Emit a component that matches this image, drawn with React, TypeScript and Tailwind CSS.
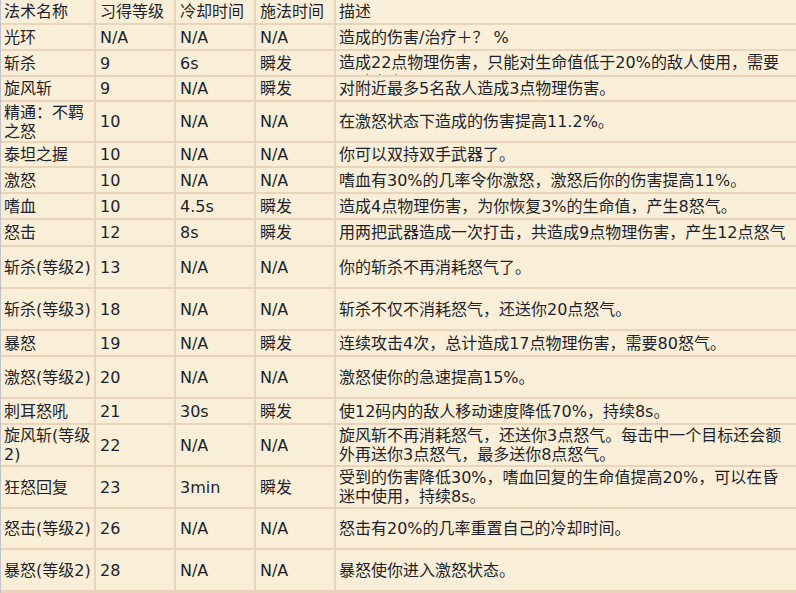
// App.tsx
//
// Warrior spell table (法术 / 习得等级 / 冷却时间 / 施法时间 / 描述).
// Old-school wiki look: cream cells on a tan table background, 2px cell spacing.

type Row = {
  name: string
  level: string
  cooldown: string
  cast: string
  desc: string
  h: string
  clip?: boolean
}

const rows: Row[] = [
  { name: '光环', level: 'N/A', cooldown: 'N/A', cast: 'N/A', desc: '造成的伤害/治疗＋？ %', h: 'h-[24px]' },
  { name: '斩杀', level: '9', cooldown: '6s', cast: '瞬发', desc: '造成22点物理伤害，只能对生命值低于20%的敌人使用，需要15点怒气。', h: 'h-[24px]', clip: true },
  { name: '旋风斩', level: '9', cooldown: 'N/A', cast: '瞬发', desc: '对附近最多5名敌人造成3点物理伤害。', h: 'h-[23px]' },
  { name: '精通：不羁之怒', level: '10', cooldown: 'N/A', cast: 'N/A', desc: '在激怒状态下造成的伤害提高11.2%。', h: 'h-[39px]' },
  { name: '泰坦之握', level: '10', cooldown: 'N/A', cast: 'N/A', desc: '你可以双持双手武器了。', h: 'h-[23px]' },
  { name: '激怒', level: '10', cooldown: 'N/A', cast: 'N/A', desc: '嗜血有30%的几率令你激怒，激怒后你的伤害提高11%。', h: 'h-[24px]' },
  { name: '嗜血', level: '10', cooldown: '4.5s', cast: '瞬发', desc: '造成4点物理伤害，为你恢复3%的生命值，产生8怒气。', h: 'h-[24px]' },
  { name: '怒击', level: '12', cooldown: '8s', cast: '瞬发', desc: '用两把武器造成一次打击，共造成9点物理伤害，产生12点怒气', h: 'h-[25px]' },
  { name: '斩杀(等级2)', level: '13', cooldown: 'N/A', cast: 'N/A', desc: '你的斩杀不再消耗怒气了。', h: 'h-[40px]' },
  { name: '斩杀(等级3)', level: '18', cooldown: 'N/A', cast: 'N/A', desc: '斩杀不仅不消耗怒气，还送你20点怒气。', h: 'h-[40px]' },
  { name: '暴怒', level: '19', cooldown: 'N/A', cast: '瞬发', desc: '连续攻击4次，总计造成17点物理伤害，需要80怒气。', h: 'h-[24px]' },
  { name: '激怒(等级2)', level: '20', cooldown: 'N/A', cast: 'N/A', desc: '激怒使你的急速提高15%。', h: 'h-[40px]' },
  { name: '刺耳怒吼', level: '21', cooldown: '30s', cast: '瞬发', desc: '使12码内的敌人移动速度降低70%，持续8s。', h: 'h-[24px]' },
  { name: '旋风斩(等级2)', level: '22', cooldown: 'N/A', cast: 'N/A', desc: '旋风斩不再消耗怒气，还送你3点怒气。每击中一个目标还会额外再送你3点怒气，最多送你8点怒气。', h: 'h-[40px]' },
  { name: '狂怒回复', level: '23', cooldown: '3min', cast: '瞬发', desc: '受到的伤害降低30%，嗜血回复的生命值提高20%，可以在昏迷中使用，持续8s。', h: 'h-[40px]' },
  { name: '怒击(等级2)', level: '26', cooldown: 'N/A', cast: 'N/A', desc: '怒击有20%的几率重置自己的冷却时间。', h: 'h-[39px]' },
  { name: '暴怒(等级2)', level: '28', cooldown: 'N/A', cast: 'N/A', desc: '暴怒使你进入激怒状态。', h: 'h-[40px]' },
]

export default function App() {
  return (
    <div
      className="h-[593px] w-[796px] overflow-hidden border-l border-[#bfc2ca] bg-[#ebd4b9] text-[16px] leading-[19px] text-[#1d1f2b]"
      style={{ fontFamily: '"DejaVu Sans", "Noto Sans CJK SC", sans-serif' }}
    >
      <table className="-mt-[2px] -ml-[2px] w-[799px] table-fixed border-separate border-spacing-[2px]">
        <colgroup>
          <col className="w-[93px]" />
          <col className="w-[78px]" />
          <col className="w-[78px]" />
          <col className="w-[78px]" />
          <col className="w-[460px]" />
        </colgroup>
        <thead>
          <tr className="h-[23px]">
            <th className="bg-[#f9efd8] p-0 pl-[3px] text-left font-normal">法术名称</th>
            <th className="bg-[#f9efd8] p-0 pl-[4px] text-left font-normal">习得等级</th>
            <th className="bg-[#f9efd8] p-0 pl-[4px] text-left font-normal">冷却时间</th>
            <th className="bg-[#f9efd8] p-0 pl-[4px] text-left font-normal">施法时间</th>
            <th className="bg-[#f9efd8] p-0 pl-[3px] text-left font-normal">描述</th>
          </tr>
        </thead>
        <tbody>
          {rows.map((r) => (
            <tr key={r.name} className={r.h}>
              <td className="bg-[#f9efd8] p-0 pl-[3px] align-middle">{r.name}</td>
              <td className="bg-[#f9efd8] p-0 pl-[4px] align-middle">{r.level}</td>
              <td className="bg-[#f9efd8] p-0 pl-[4px] align-middle">{r.cooldown}</td>
              <td className="bg-[#f9efd8] p-0 pl-[4px] align-middle">{r.cast}</td>
              <td className="bg-[#f9efd8] p-0 pl-[3px] pr-[4px] align-middle">
                {r.clip ? (
                  // second line is cut by the row height, as in the source page
                  <div className="h-[24px] overflow-hidden pt-[2px] leading-[20px]">{r.desc}</div>
                ) : (
                  r.desc
                )}
              </td>
            </tr>
          ))}
        </tbody>
      </table>
    </div>
  )
}
